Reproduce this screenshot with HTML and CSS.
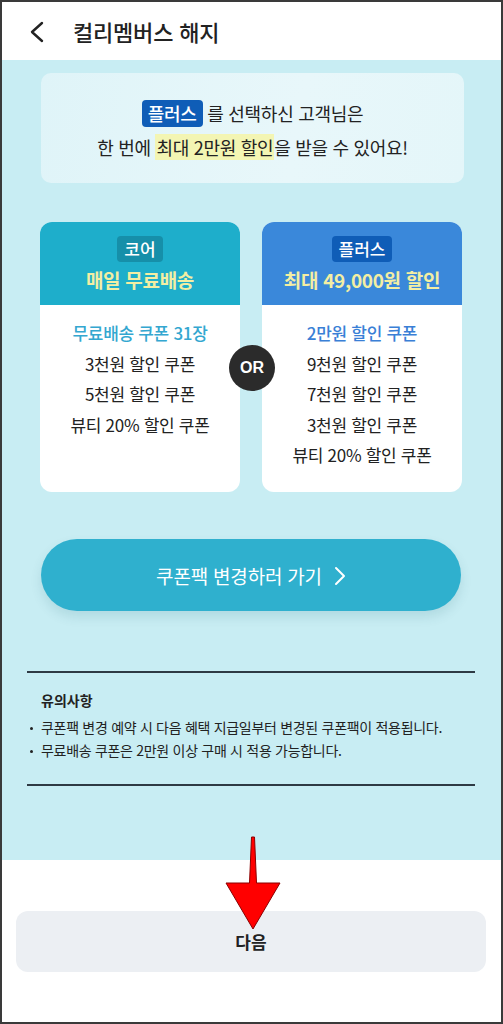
FILE: index.html
```html
<!DOCTYPE html>
<html lang="ko">
<head>
<meta charset="utf-8">
<link rel="stylesheet" href="styles.css">
</head>
<body>
<div class="frame">
  <header class="topbar">
    <svg class="back" width="16" height="22" viewBox="0 0 16 22"><path d="M13 2 L3 11 L13 20" fill="none" stroke="#222" stroke-width="2.4" stroke-linecap="round" stroke-linejoin="round"/></svg>
    <h1 class="title">컬리멤버스 해지</h1>
  </header>
  <main class="content">
    <section class="info">
      <p class="info-line"><span class="tag tag-plus">플러스</span> 를 선택하신 고객님은</p>
      <p class="info-line">한 번에 <mark class="hl">최대 2만원 할인</mark>을 받을 수 있어요!</p>
    </section>
    <section class="cards">
      <div class="card">
        <div class="card-head head-core">
          <span class="tag tag-core">코어</span>
          <div class="card-title">매일 무료배송</div>
        </div>
        <ul class="card-body">
          <li class="first core-first">무료배송 쿠폰 31장</li>
          <li>3천원 할인 쿠폰</li>
          <li>5천원 할인 쿠폰</li>
          <li>뷰티 20% 할인 쿠폰</li>
        </ul>
      </div>
      <div class="card">
        <div class="card-head head-plus">
          <span class="tag tag-plus">플러스</span>
          <div class="card-title">최대 49,000원 할인</div>
        </div>
        <ul class="card-body">
          <li class="first plus-first">2만원 할인 쿠폰</li>
          <li>9천원 할인 쿠폰</li>
          <li>7천원 할인 쿠폰</li>
          <li>3천원 할인 쿠폰</li>
          <li>뷰티 20% 할인 쿠폰</li>
        </ul>
      </div>
      <div class="or">OR</div>
    </section>
    <button class="change-btn">쿠폰팩 변경하러 가기<svg class="chev" width="12" height="20" viewBox="0 0 12 20"><path d="M2 2 L10 10 L2 18" fill="none" stroke="#fff" stroke-width="2" stroke-linecap="round" stroke-linejoin="round"/></svg></button>
    <section class="notice">
      <h2 class="notice-title">유의사항</h2>
      <ul class="notice-list">
        <li>쿠폰팩 변경 예약 시 다음 혜택 지급일부터 변경된 쿠폰팩이 적용됩니다.</li>
        <li>무료배송 쿠폰은 2만원 이상 구매 시 적용 가능합니다.</li>
      </ul>
    </section>
  </main>
  <footer class="bottom">
    <button class="next-btn">다음</button>
  </footer>
  <svg class="arrow" width="60" height="96" viewBox="0 0 60 96"><path d="M28.5 2 L31.5 2 L33.5 48 L57 48 L30 94 L3 48 L26.5 48 Z" fill="#ff0000" stroke="#8a0000" stroke-width="1"/></svg>
</div>
</body>
</html>
```
FILE: styles.css
```css
* { box-sizing: border-box; }
html, body { margin: 0; padding: 0; }
body {
  font-family: "Noto Sans CJK KR", "Noto Sans", sans-serif;
  color: #222;
  background: #fff;
}
.frame {
  position: relative;
  width: 503px;
  height: 1024px;
  border: 2px solid #3a3a3a;
  display: flex;
  flex-direction: column;
  overflow: hidden;
}
.topbar {
  height: 58px;
  display: flex;
  align-items: center;
  padding-left: 27px;
  background: #fff;
  flex: none;
}
.back { margin-top: 2px; }
.title {
  margin: 0 0 0 28px;
  font-size: 22px;
  font-weight: 500;
  color: #222;
  letter-spacing: -0.2px;
}
.content {
  height: 800px;
  flex: none;
  background: #c8edf3;
  padding: 13px 0 0 0;
  display: flex;
  flex-direction: column;
}
.info {
  margin: 0 37px 0 39px;
  height: 110px;
  border-radius: 10px;
  background: linear-gradient(100deg, #dff4f8 0%, #e8f7fa 60%, #e4f6f9 100%);
  display: flex;
  flex-direction: column;
  justify-content: center;
  align-items: center;
  padding-top: 3px;
}
.info-line {
  margin: 0;
  font-size: 18px;
  line-height: 34px;
  letter-spacing: -0.3px;
}
.tag {
  display: inline-block;
  color: #fff;
  border-radius: 4px;
  padding: 0 6px;
  line-height: 27px;
  font-weight: 500;
}
.tag-plus { background: #0f5db7; }
.tag-core { background: #168fa9; }
.hl {
  background: #f3f5b3;
  color: #222;
  padding: 0 1px;
}
.cards {
  position: relative;
  margin: 39px 39px 0 38px;
  display: grid;
  grid-template-columns: 200px 200px;
  column-gap: 22px;
  height: 270px;
}
.card {
  background: #fff;
  border-radius: 12px;
  overflow: hidden;
}
.card-head {
  height: 83px;
  display: flex;
  flex-direction: column;
  align-items: center;
  padding-top: 14px;
}
.head-core { background: #1eaecb; }
.head-plus { background: #3a88da; }
.card-head .tag {
  font-size: 17px;
  line-height: 26px;
  padding: 0 7px;
}
.card-title {
  margin-top: 5px;
  font-size: 19px;
  font-weight: 700;
  color: #f3eea3;
  line-height: 26px;
  letter-spacing: -0.3px;
}
.card-body {
  list-style: none;
  margin: 0;
  padding: 13px 0 0 0;
  text-align: center;
}
.card-body li {
  font-size: 17px;
  line-height: 30.5px;
  letter-spacing: -0.3px;
  color: #222;
}
.card-body li.first { font-weight: 500; }
.core-first { color: #34a7d0 !important; }
.plus-first { color: #3a7fd6 !important; }
.or {
  position: absolute;
  left: 189px;
  top: 123px;
  width: 46px;
  height: 46px;
  border-radius: 50%;
  background: #2b2b2b;
  color: #fff;
  font-family: "Liberation Sans", sans-serif;
  font-weight: 700;
  font-size: 16px;
  display: flex;
  align-items: center;
  justify-content: center;
}
.change-btn {
  margin: 47px 40px 0 39px;
  height: 72px;
  border: none;
  border-radius: 36px;
  background: #2fb0ce;
  color: #fff;
  font-family: inherit;
  font-size: 19px;
  letter-spacing: -0.2px;
  display: flex;
  align-items: center;
  justify-content: center;
  gap: 12px;
  box-shadow: 0 6px 12px rgba(0, 80, 100, 0.12);
  padding: 0 0 0 0;
}
.chev { margin-top: 1px; }
.notice {
  margin: 60px 26px 0 25px;
  border-top: 2px solid #2e3a44;
  border-bottom: 2px solid #2e3a44;
  padding: 17px 0 22px 14px;
}
.notice-title {
  margin: 0;
  font-size: 14px;
  font-weight: 700;
  line-height: 20px;
}
.notice-list {
  margin: 6px 0 0 0;
  padding: 0;
  list-style: none;
}
.notice-list li {
  position: relative;
  font-size: 14px;
  line-height: 23px;
  letter-spacing: -0.3px;
  color: #222;
}
.notice-list li::before {
  content: "";
  position: absolute;
  left: -11px;
  top: 11px;
  width: 3px;
  height: 3px;
  border-radius: 50%;
  background: #222;
}
.bottom {
  flex: 1;
  background: #fff;
  padding: 51px 15px 0 14px;
}
.next-btn {
  width: 100%;
  height: 61px;
  border: none;
  border-radius: 12px;
  background: #eceff3;
  font-family: inherit;
  font-size: 17px;
  font-weight: 700;
  color: #222;
}
.arrow {
  position: absolute;
  left: 221px;
  top: 833px;
}
```
